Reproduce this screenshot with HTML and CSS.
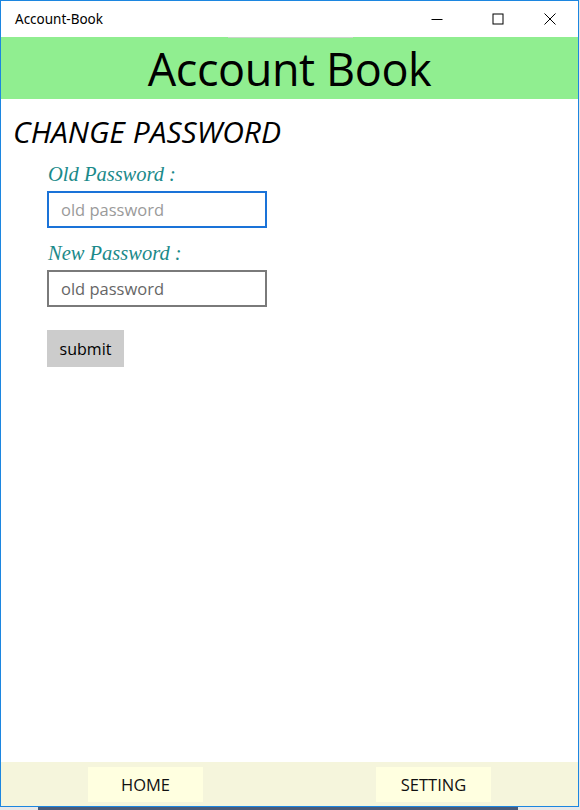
FILE: index.html
```html
<!DOCTYPE html>
<html>
<head>
    <title>Account-Book</title>
    <link rel="stylesheet" href="styles.css">
</head>
<body>
    <div class="window">
        <div class="titlebar">
            <div class="title">Account-Book</div>
            <div class="controls">
                <div class="ctrl ctrl-min">
                    <svg width="12" height="12" viewBox="0 0 12 12"><path d="M0.5 6.5h11" stroke="#000" stroke-width="1"/></svg>
                </div>
                <div class="ctrl ctrl-max">
                    <svg width="12" height="12" viewBox="0 0 12 12"><rect x="1" y="1" width="10" height="10" fill="none" stroke="#000" stroke-width="1"/></svg>
                </div>
                <div class="ctrl ctrl-close">
                    <svg width="12" height="12" viewBox="0 0 12 12"><path d="M0.5 0.5L11.5 11.5M11.5 0.5L0.5 11.5" stroke="#000" stroke-width="1"/></svg>
                </div>
            </div>
        </div>
        <div class="header">
            <div class="header-line"></div>
            <h1>Account Book</h1>
        </div>
        <div class="main">
            <h2>CHANGE PASSWORD</h2>
            <div class="form">
                <label class="label">Old Password :</label>
                <input class="field focused" type="password" placeholder="old password">
                <label class="label">New Password :</label>
                <input class="field" type="password" placeholder="old password">
                <div class="submit">submit</div>
            </div>
        </div>
        <div class="footer">
            <div class="nav">HOME</div>
            <div class="nav">SETTING</div>
        </div>
    </div>
    <div class="taskbar"></div>
</body>
</html>
```

FILE: styles.css
```css
body {
    margin: 0;
    padding: 0;
    width: 580px;
    height: 810px;
    background: #e8e8e8;
    font-family: "Noto Sans", "Open Sans", sans-serif;
    overflow: hidden;
}
.window {
    width: 577px;
    height: 805px;
    border: 1px solid #1c86e0;
    background: white;
    display: flex;
    flex-direction: column;
}
.titlebar {
    height: 36px;
    display: flex;
    align-items: center;
    justify-content: space-between;
}
.title {
    padding-left: 14px;
    font-size: 13.5px;
    color: #000;
}
.controls {
    display: flex;
    height: 100%;
}
.ctrl {
    height: 100%;
    display: flex;
    align-items: center;
    justify-content: center;
}
.ctrl-min {
    width: 74px;
}
.ctrl-max {
    width: 48px;
}
.ctrl-close {
    width: 56px;
}
.header {
    height: 62px;
    background: #90ee90;
    display: flex;
    align-items: center;
    justify-content: center;
    position: relative;
}
.header-line {
    position: absolute;
    top: 0;
    left: 227px;
    width: 125px;
    height: 1px;
    background: #c9d6c9;
}
.header h1 {
    margin: 0;
    font-family: "Open Sans", sans-serif;
    font-weight: normal;
    font-size: 45px;
    letter-spacing: -0.4px;
    color: #000;
}
.main {
    flex: 1;
}
.main h2 {
    margin: 16px 0 0 12px;
    font-family: "Open Sans", sans-serif;
    font-style: italic;
    font-weight: normal;
    font-size: 30px;
    line-height: 34px;
    color: #000;
}
.form {
    padding-left: 46px;
    display: flex;
    flex-direction: column;
    align-items: flex-start;
}
.label {
    font-family: "Liberation Serif", serif;
    font-style: italic;
    font-size: 20.5px;
    line-height: 24px;
    color: #1b8a8a;
    margin-top: 13px;
    margin-left: 1px;
    margin-bottom: 5px;
}
.field {
    box-sizing: border-box;
    width: 220px;
    height: 37px;
    border: 2px solid #7a7a7a;
    padding: 0 12px;
    font-family: "Open Sans", sans-serif;
    font-size: 16.5px;
    outline: none;
    margin: 0;
}
.field::placeholder {
    color: #666;
}
.field.focused {
    border-color: #1a73d8;
}
.field.focused::placeholder {
    color: #9a9a9a;
}
.submit {
    margin-top: 23px;
    width: 77px;
    height: 37px;
    background: #cccccc;
    display: flex;
    align-items: center;
    justify-content: center;
    font-family: "Open Sans", sans-serif;
    font-size: 16px;
    color: #000;
}
.footer {
    height: 44px;
    background: #f5f5dc;
    display: flex;
    align-items: center;
    padding-left: 87px;
    gap: 173px;
}
.nav {
    width: 115px;
    height: 35px;
    background: #ffffe0;
    display: flex;
    align-items: center;
    justify-content: center;
    font-family: "Open Sans", sans-serif;
    font-size: 16.5px;
    color: #111;
}
.taskbar {
    height: 3px;
    margin-left: 38px;
    width: 480px;
    background: #4a5a78;
}
```
